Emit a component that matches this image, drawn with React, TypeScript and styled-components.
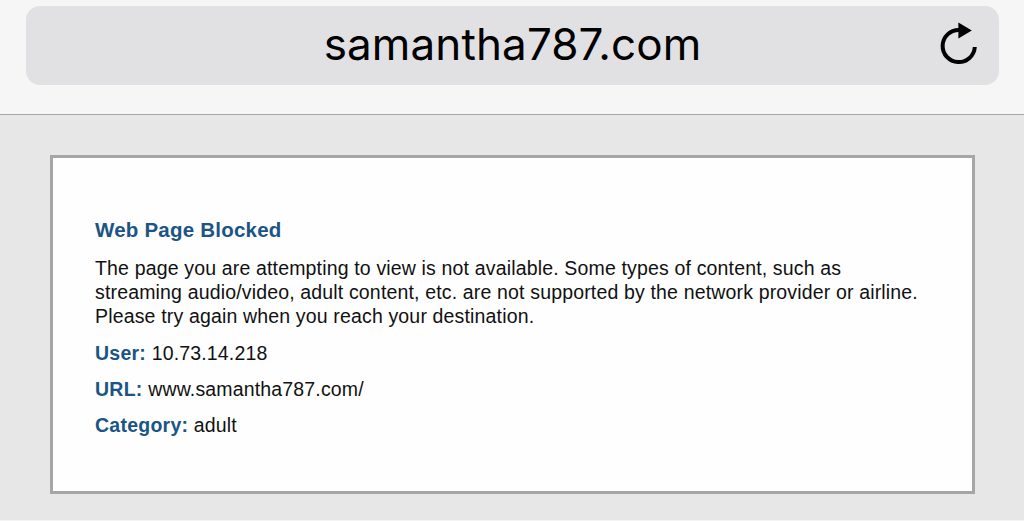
import styled, { createGlobalStyle } from "styled-components"

const details = [
    { label: "User:", value: "10.73.14.218" },
    { label: "URL:", value: "www.samantha787.com/" },
    { label: "Category:", value: "adult" },
]

const App = () => {
    return (
        <Page>
            <GlobalStyle />
            <Toolbar>
                <AddressBar>
                    <Address>samantha787.com</Address>
                    <ReloadButton aria-label="Reload">
                        <svg width="40" height="46" viewBox="0 0 40 46">
                            <path
                                d="M20 10.9 A16.1 16.1 0 1 0 35.8 28"
                                fill="none"
                                stroke="#000"
                                strokeWidth="4"
                            />
                            <path d="M19.4 3.4 L32.8 11.4 L19.4 19.6 Z" fill="#000" />
                        </svg>
                    </ReloadButton>
                </AddressBar>
            </Toolbar>
            <Content>
                <Card>
                    <Title>Web Page Blocked</Title>
                    <Message>
                        The page you are attempting to view is not available. Some types of content, such as<br />
                        streaming audio/video, adult content, etc. are not supported by the network provider or airline.<br />
                        Please try again when you reach your destination.
                    </Message>
                    {details.map((item) => (
                        <Detail key={item.label}>
                            <Label>{item.label}</Label> {item.value}
                        </Detail>
                    ))}
                </Card>
            </Content>
        </Page>
    )
}

export default App

const GlobalStyle = createGlobalStyle`
    body {
        margin: 0;
    }

    * {
        box-sizing: border-box;
    }
`

const Page = styled.div`
    display: flex;
    flex-direction: column;
    height: 521px;
    overflow: hidden;
    background: #e7e7e7;
`

const Toolbar = styled.header`
    height: 115px;
    flex-shrink: 0;
    padding: 6px 25px 0 26px;
    background: #f6f6f7;
    border-bottom: 1px solid #a5a5ab;
`

const AddressBar = styled.div`
    display: grid;
    grid-template-columns: 60px 1fr 60px;
    align-items: center;
    height: 79px;
    background: #e1e1e4;
    border-radius: 14px;
`

const Address = styled.span`
    grid-column: 2;
    padding-bottom: 2px;
    text-align: center;
    white-space: nowrap;
    font-family: Inter, "Liberation Sans", sans-serif;
    font-size: 44px;
    line-height: 77px;
    letter-spacing: 0.12px;
    color: #000;
`

const ReloadButton = styled.button`
    display: flex;
    width: 40px;
    height: 46px;
    margin-bottom: 7px;
    padding: 0;
    border: none;
    background: none;
`

const Content = styled.main`
    flex: 1;
    padding: 40px 49px 26px 50px;
    border-bottom: 1px solid #f4f4f4;
`

const Card = styled.section`
    height: 339px;
    padding: 60px 42px 0;
    background: #fefefe;
    border: 3px solid #a6a6a6;
    font-family: "Liberation Sans", Arial, sans-serif;
    font-size: 19.5px;
    line-height: 24px;
    letter-spacing: 0.16px;
    color: #111;
`

const Title = styled.h1`
    margin: 0;
    font-size: 20.5px;
    line-height: 24px;
    letter-spacing: 0.22px;
    color: #1b5585;
`

const Message = styled.p`
    margin: 14px 0 13px;
    white-space: nowrap;
`

const Detail = styled.p`
    margin: 0 0 12px;
`

const Label = styled.strong`
    letter-spacing: 0.25px;
    color: #1b5585;
`
